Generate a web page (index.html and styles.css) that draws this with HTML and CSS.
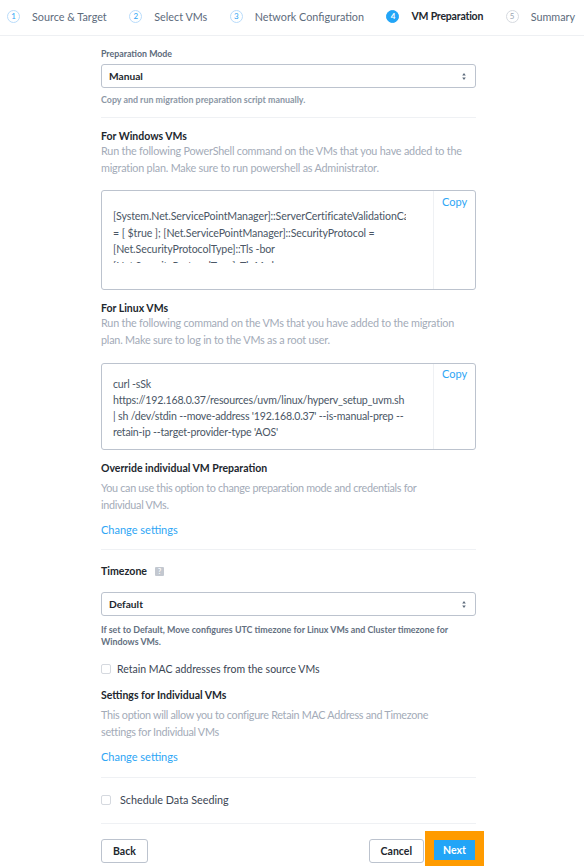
FILE: index.html
```html
<!DOCTYPE html>
<html lang="en">
<head>
<meta charset="utf-8">
<title>VM Preparation</title>
<link rel="stylesheet" href="styles.css">
</head>
<body>
<header class="steps">
  <div class="step done"><span class="num">1</span><span>Source &amp; Target</span></div>
  <div class="step done"><span class="num">2</span><span>Select VMs</span></div>
  <div class="step done"><span class="num">3</span><span>Network Configuration</span></div>
  <div class="step active"><span class="num">4</span><span>VM Preparation</span></div>
  <div class="step todo"><span class="num">5</span><span>Summary</span></div>
</header>
<main class="form">
  <label class="small-label">Preparation Mode</label>
  <div class="select manual"><span>Manual</span><svg class="carets" width="6" height="9" viewBox="0 0 6 9"><path d="M3 1 4.8 3.6H1.2zM3 8 1.2 5.4H4.8z"/></svg></div>
  <p class="hint h1">Copy and run migration preparation script manually.</p>
  <hr class="rule r1">

  <h3 class="title windows">For Windows VMs</h3>
  <p class="desc">Run the following PowerShell command on the VMs that you have added to the migration plan. Make sure to run powershell as Administrator.</p>
  <div class="codebox win">
    <div class="code"><div class="clip">[System.Net.ServicePointManager]::ServerCertificateValidationCallback<br>= [ $true ]; [Net.ServicePointManager]::SecurityProtocol =<br>[Net.SecurityProtocolType]::Tls -bor<br>[Net.SecurityProtocolType]::Tls11 -bor</div></div>
    <a class="copy">Copy</a>
  </div>

  <h3 class="title linux">For Linux VMs</h3>
  <p class="desc">Run the following command on the VMs that you have added to the migration plan. Make sure to log in to the VMs as a root user.</p>
  <div class="codebox lin">
    <div class="code"><div class="plain">curl -sSk<br>https://192.168.0.37/resources/uvm/linux/hyperv_setup_uvm.sh<br>| sh /dev/stdin --move-address '192.168.0.37' --is-manual-prep --<br>retain-ip --target-provider-type 'AOS'</div></div>
    <a class="copy">Copy</a>
  </div>

  <h3 class="title override">Override individual VM Preparation</h3>
  <p class="desc d-gap">You can use this option to change preparation mode and credentials for individual VMs.</p>
  <a class="link l1">Change settings</a>
  <hr class="rule r2">

  <div class="tz"><span>Timezone</span><span class="help">?</span></div>
  <div class="select def"><span>Default</span><svg class="carets" width="6" height="9" viewBox="0 0 6 9"><path d="M3 1 4.8 3.6H1.2zM3 8 1.2 5.4H4.8z"/></svg></div>
  <p class="hint h2">If set to Default, Move configures UTC timezone for Linux VMs and Cluster timezone for Windows VMs.</p>

  <div class="check c1"><span class="box"></span><span>Retain MAC addresses from the source VMs</span></div>
  <h3 class="title settings">Settings for Individual VMs</h3>
  <p class="desc d-gap">This option will allow you to configure Retain MAC Address and Timezone settings for Individual VMs</p>
  <a class="link l2">Change settings</a>
  <hr class="rule r3">

  <div class="check c2"><span class="box"></span><span>Schedule Data Seeding</span></div>
  <hr class="rule r4">

  <footer class="actions">
    <button class="btn">Back</button>
    <div class="right">
      <button class="btn">Cancel</button>
      <button class="btn next">Next</button>
    </div>
  </footer>
</main>
</body>
</html>
```
FILE: styles.css
```css
* { box-sizing: border-box; }
html, body { margin: 0; height: 866px; overflow: hidden; background: #fff; }
body { font-family: "Lato", "Liberation Sans", sans-serif; font-size: 11px; color: #22272e; }

.steps { height: 36px; padding: 0 0 3px 7px; border-bottom: 1px solid #eef0f3; display: flex; align-items: center; white-space: nowrap; }
.step { display: flex; align-items: center; gap: 12px; color: #5d6b7c; font-size: 10.8px; margin-right: 22.5px; }
.step:last-child { margin-right: 0; }
.num { width: 13px; height: 13px; border-radius: 50%; border: 1px solid #b9dcfb; color: #2ea6f5; font-size: 8px; display: flex; align-items: center; justify-content: center; }
.step.active { color: #22272e; font-weight: 700; font-size: 10.5px; letter-spacing: -0.2px; }
.step.active .num { background: #22a5f7; border-color: #22a5f7; color: #fff; font-weight: 700; letter-spacing: 0; }
.step.todo .num { border-color: #d6dae0; color: #9aa5b1; }

.form { margin-left: 101px; width: 375px; display: flex; flex-direction: column; }
.small-label { font-size: 8.8px; color: #5d6b7c; font-weight: 700; line-height: 12px; margin-top: 12px; }
.select { height: 24px; border: 1px solid #bcc3ce; border-radius: 3px; display: flex; align-items: center; justify-content: space-between; padding: 0 8px 0 7px; font-size: 10.2px; color: #22272e; font-weight: 700; }
.select.manual { margin-top: 4px; }
.carets { fill: #5d6b7c; }
.hint { margin: 0; font-size: 8.9px; line-height: 12px; color: #8c97a5; font-weight: 700; }
.h1 { margin-top: 6px; }
.h2 { margin-top: 8px; color: #64707f; }
.rule { margin: 0; border: 0; border-top: 1px solid #eff1f4; width: 100%; }
.r1 { margin-top: 11px; }
.title { margin: 0; font-size: 10.5px; line-height: 12px; font-weight: 700; color: #22272e; }
.windows { margin-top: 12px; }
.desc { margin: 0; font-size: 10.8px; line-height: 17px; letter-spacing: -0.2px; color: #a3abb8; }
.codebox { display: flex; border: 1px solid #bcc3ce; border-radius: 3px; margin-top: 14px; }
.code { flex: 1; min-width: 0; padding: 17px 0 0 11px; font-size: 10.6px; line-height: 16.5px; letter-spacing: -0.19px; color: #4a5665; overflow: hidden; white-space: nowrap; }
.clip { width: 293px; height: 55px; overflow: hidden; letter-spacing: -0.1px; }
.plain { line-height: 16px; }
.copy { width: 42px; border-left: 1px solid #eff1f4; color: #2ea6f5; font-size: 11px; text-align: center; padding-top: 4px; line-height: 14px; }
.win { height: 100px; }
.lin { height: 87px; margin-top: 15px; }
.lin .code { padding-top: 12px; }
.lin .copy { padding-top: 3px; }
.linux { margin-top: 12px; }
.override { margin-top: 12px; }
.d-gap { margin-top: 5px; max-width: 350px; letter-spacing: -0.3px; }
.link { color: #2ea6f5; font-size: 11px; line-height: 14px; margin-top: 10px; }
.r2 { margin-top: 12px; }
.tz { display: flex; align-items: center; gap: 8px; margin-top: 14px; font-size: 10.6px; font-weight: 700; line-height: 14px; }
.help { width: 9px; height: 9px; border-radius: 1px; background: #c3c8d0; color: #fff; font-size: 7px; line-height: 9px; text-align: center; }
.select.def { margin-top: 14px; }
.check { display: flex; align-items: center; line-height: 14px; color: #3b4654; }
.box { width: 10px; height: 10px; border: 1px solid #d5d9df; border-radius: 2px; background: #fff; }
.c1 { gap: 6px; margin-top: 14px; font-size: 10.5px; }
.settings { margin-top: 13px; }
.r3 { margin-top: 13px; }
.c2 { gap: 9px; margin-top: 15px; font-size: 10.8px; }
.r4 { margin-top: 16px; }
.actions { display: flex; justify-content: space-between; margin-top: 15px; }
.right { display: flex; gap: 10px; }
.btn { height: 24px; border: 1px solid #bcc3ce; border-radius: 3px; background: #fff; padding: 0 11px; font: 700 10.5px "Lato", "Liberation Sans", sans-serif; color: #22272e; }
.next { height: 20px; width: 41px; padding: 0; margin-top: 1px; margin-right: 1px; border: 0; border-radius: 0; background: #22a5f7; color: #fff; box-shadow: 0 0 0 9px #ff9b00; }
```
